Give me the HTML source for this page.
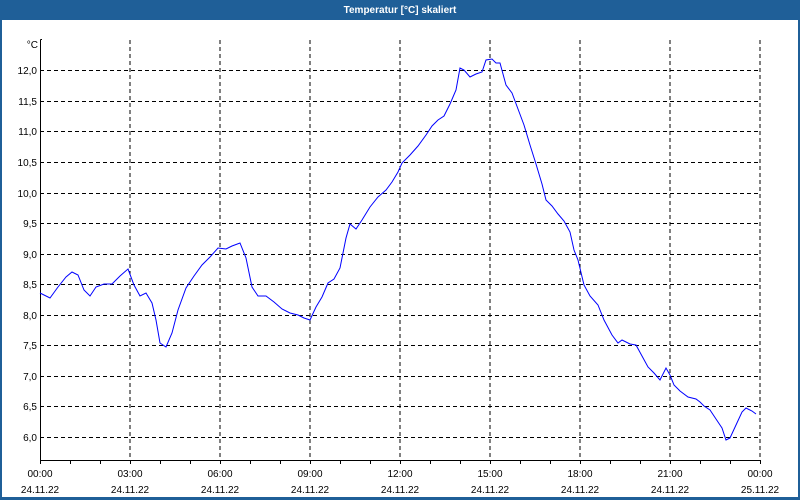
<!DOCTYPE html>
<html><head><style>
body{margin:0;width:800px;height:500px;overflow:hidden;background:#fff;font-family:"Liberation Sans",sans-serif}
</style></head><body>
<svg width="800" height="500" xmlns="http://www.w3.org/2000/svg" style="display:block">
<rect x="0" y="0" width="800" height="500" fill="#1f5f98"/>
<rect x="2" y="20" width="796" height="477" fill="#fff"/>
<text x="400" y="13" fill="#fff" font-size="10" font-weight="bold" text-anchor="middle">Temperatur [°C] skaliert</text>
<g stroke="#000" stroke-width="1" stroke-dasharray="4,3" fill="none">
<path d="M130 40V460M220 40V460M310 40V460M400 40V460M490 40V460M580 40V460M670 40V460M760 40V460"/>
<path d="M40 70.5H760M40 101.5H760M40 131.5H760M40 162.5H760M40 193.5H760M40 223.5H760M40 254.5H760M40 284.5H760M40 315.5H760M40 345.5H760M40 376.5H760M40 406.5H760M40 437.5H760"/>
</g>
<path d="M40.5 39.5V460.5H760.5M40.5 39.5H42" stroke="#000" fill="none"/>
<path d="M70.5 460V464M100.5 460V464M130.5 460V464M160.5 460V464M190.5 460V464M220.5 460V464M250.5 460V464M280.5 460V464M310.5 460V464M340.5 460V464M370.5 460V464M400.5 460V464M430.5 460V464M460.5 460V464M490.5 460V464M520.5 460V464M550.5 460V464M580.5 460V464M610.5 460V464M640.5 460V464M670.5 460V464M700.5 460V464M730.5 460V464M760.5 460V464M40.5 460V464" stroke="#000"/>
<g font-size="10" fill="#000" text-anchor="end">
<text x="38" y="48">°C</text>
<text x="37" y="74">12,0</text><text x="37" y="105">11,5</text><text x="37" y="135">11,0</text><text x="37" y="166">10,5</text><text x="37" y="197">10,0</text><text x="37" y="227">9,5</text><text x="37" y="258">9,0</text><text x="37" y="288">8,5</text><text x="37" y="319">8,0</text><text x="37" y="349">7,5</text><text x="37" y="380">7,0</text><text x="37" y="410">6,5</text><text x="37" y="441">6,0</text>
</g>
<g font-size="10" fill="#000" text-anchor="middle">
<text x="40" y="477">00:00</text><text x="40" y="493">24.11.22</text>
<text x="130" y="477">03:00</text><text x="130" y="493">24.11.22</text>
<text x="220" y="477">06:00</text><text x="220" y="493">24.11.22</text>
<text x="310" y="477">09:00</text><text x="310" y="493">24.11.22</text>
<text x="400" y="477">12:00</text><text x="400" y="493">24.11.22</text>
<text x="490" y="477">15:00</text><text x="490" y="493">24.11.22</text>
<text x="580" y="477">18:00</text><text x="580" y="493">24.11.22</text>
<text x="670" y="477">21:00</text><text x="670" y="493">24.11.22</text>
<text x="760" y="477">00:00</text><text x="760" y="493">25.11.22</text>
</g>
<polyline fill="none" stroke="#0000ff" stroke-width="1" points="40,293 50,298 58,287 66,277 72,272 78,275 84,290 90,296 96,287 104,284 112,284 120,276 128,269 134,285 140,296 146,293 152,303 156,320 160,343 166,347 172,333 178,310 186,288 194,276 202,265 210,257 218,248 226,249 232,246 240,243 246,258 252,287 258,296 266,296 274,302 282,309 290,313 298,315 304,318 310,320 316,307 322,297 328,283 334,279 340,268 346,238 350,224 356,229 362,220 370,207 378,197 386,190 392,182 398,172 402,163 410,155 418,146 426,135 432,126 438,120 444,116 450,104 456,90 460,68 464,70 470,77 476,74 482,72 486,60 492,59 496,63 500,63 506,85 512,93 518,109 524,125 530,145 536,164 542,184 546,200 552,206 558,214 564,221 570,232 574,250 578,260 584,285 590,296 598,305 604,320 612,335 618,343 622,340 630,344 636,345 642,356 648,367 654,373 660,380 666,368 670,375 674,385 680,391 688,397 696,399 700,402 704,406 710,410 716,419 722,428 726,440 730,438 736,425 742,412 746,408 752,411 756,414"/>
</svg>
</body></html>
